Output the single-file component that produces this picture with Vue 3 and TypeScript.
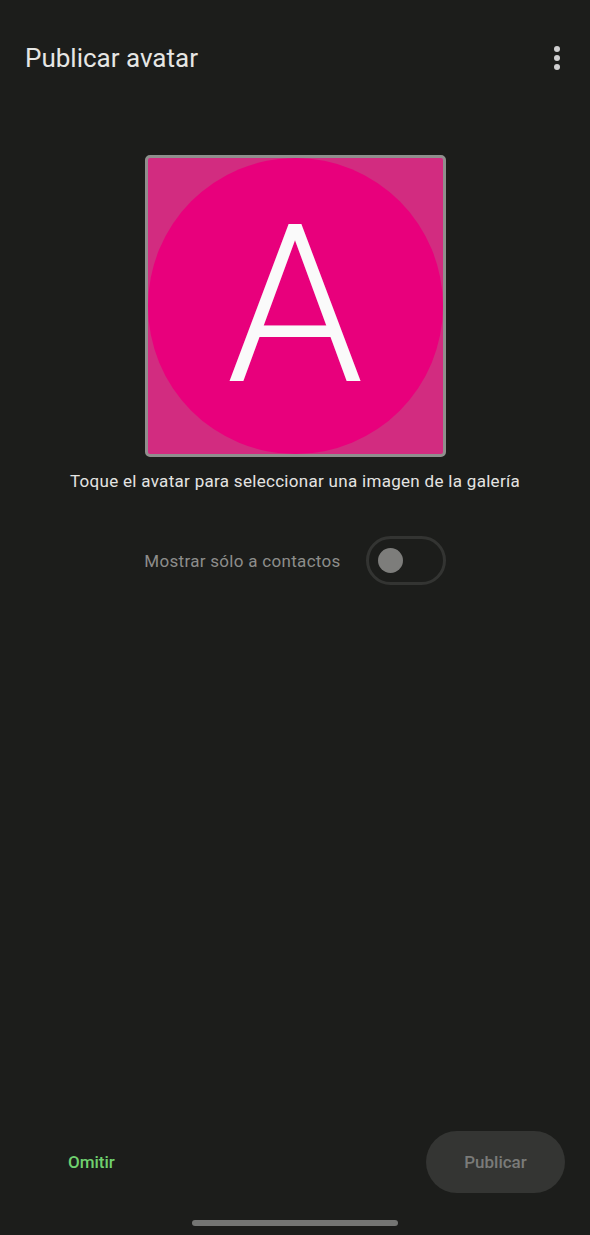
<script setup lang="ts">
const title: string = "Publicar avatar";
</script>

<template>
  <div class="screen">
    <header class="bar">
      <h1 class="title">{{ title }}</h1>
      <div class="more" aria-label="Más opciones"><i></i><i></i><i></i></div>
    </header>

    <main class="content">
      <div class="avatar-frame">
        <div class="avatar-circle">A</div>
      </div>
      <p class="hint">Toque el avatar para seleccionar una imagen de la galería</p>
      <div class="contacts">
        <span class="contacts-label">Mostrar sólo a contactos</span>
        <div class="switch"><span class="thumb"></span></div>
      </div>
    </main>

    <footer class="actions">
      <button class="skip">Omitir</button>
      <button class="publish">Publicar</button>
    </footer>
    <div class="nav"><span class="handle"></span></div>
  </div>
</template>

<style>
html, body { margin: 0; background: #1c1d1b; }
</style>

<style scoped>
.screen {
  width: 590px;
  height: 1235px;
  background: #1c1d1b;
  display: flex;
  flex-direction: column;
  font-family: Roboto, "Liberation Sans", sans-serif;
  overflow: hidden;
}
.bar {
  height: 116px;
  flex: none;
  display: flex;
  align-items: center;
  justify-content: space-between;
  padding: 0 30px 0 25px;
  box-sizing: border-box;
}
.title {
  margin: 0;
  font-size: 26px;
  font-weight: 400;
  color: #e6e6e4;
}
.more {
  display: flex;
  flex-direction: column;
  gap: 3px;
}
.more i {
  width: 6px;
  height: 6px;
  border-radius: 50%;
  background: #cfcfd0;
}
.content {
  flex: 1;
  display: flex;
  flex-direction: column;
  align-items: center;
  padding-top: 39px;
}
.avatar-frame {
  width: 301px;
  height: 302px;
  box-sizing: border-box;
  border: 3px solid #8f8f8d;
  border-radius: 5px;
  background: #d22c80;
  display: flex;
  overflow: hidden;
}
.avatar-circle {
  flex: 1;
  border-radius: 50%;
  background: #e8007c;
  color: #fafafa;
  font-size: 220px;
  font-weight: 300;
  display: flex;
  align-items: center;
  justify-content: center;
  line-height: 1;
}
.hint {
  margin: 13px 0 0;
  font-size: 17px;
  line-height: 22px;
  letter-spacing: 0.3px;
  color: #e4e4e2;
}
.contacts {
  margin-top: 44px;
  display: flex;
  align-items: center;
  gap: 25px;
}
.contacts-label {
  font-size: 17px;
  letter-spacing: 0.3px;
  color: #8d8d8b;
}
.switch {
  width: 80px;
  height: 49px;
  box-sizing: border-box;
  border: 3px solid #333432;
  border-radius: 25px;
  display: flex;
  align-items: center;
  padding-left: 9px;
}
.thumb {
  width: 25px;
  height: 25px;
  border-radius: 50%;
  background: #7d7d7b;
}
.actions {
  flex: none;
  display: flex;
  align-items: center;
  justify-content: space-between;
  padding: 0 25px 0 68px;
}
.skip, .publish {
  border: none;
  background: none;
  padding: 0;
  font-family: inherit;
  font-size: 17px;
  font-weight: 500;
}
.skip { color: #6fd06f; }
.publish {
  width: 139px;
  height: 62px;
  border-radius: 31px;
  background: #343533;
  color: #7a7b79;
}
.nav {
  flex: none;
  height: 42px;
  display: flex;
  justify-content: center;
  padding-top: 27px;
  box-sizing: border-box;
}
.handle {
  width: 206px;
  height: 6px;
  border-radius: 3px;
  background: #747573;
}
</style>
